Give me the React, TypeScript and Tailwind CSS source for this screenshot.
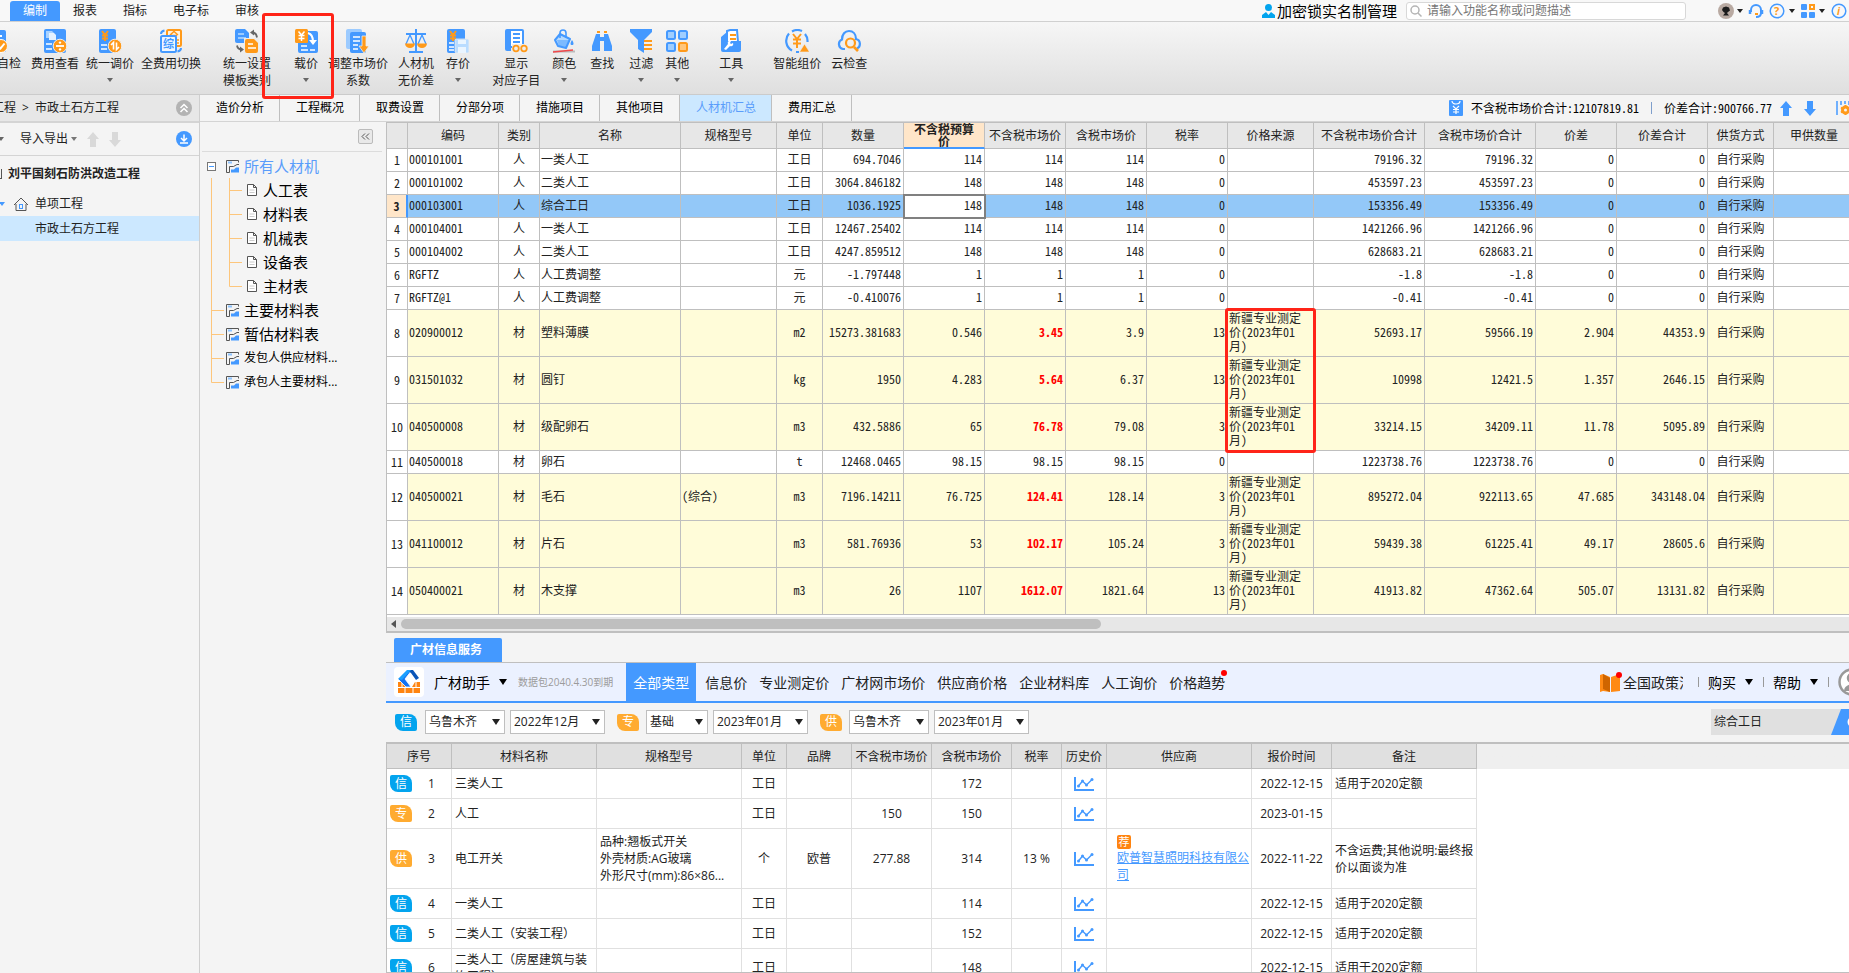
import { ReactNode, useState } from "react";

interface ribbonInterface {
  label: string[];
  icon: ReactNode;
  space: string;
  arrow?: boolean;
  marked?: boolean;
}
interface materialInterface {
  code: string;
  type: string;
  name: string;
  spec?: string;
  unit: string;
  values: string[];        // 数量, 预算价, 不含税市场价, 含税市场价, 税率
  totals: string[];        // 不含税合计, 含税合计, 价差, 价差合计
  priced?: boolean;
}
interface quoteInterface {
  tag: "信" | "专" | "供";
  name: string;
  spec?: string;
  unit: string;
  brand?: string;
  net?: string;
  gross: string;
  rate?: string;
  supplier?: string;
  date: string;
  note: string;
}

const BLUE = "#4499ff";
const ORANGE = "#ff9a1a";
const uiFont = "font-['Open_Sans','Noto_Sans_CJK_SC',sans-serif]";
const gridFont = "font-['Noto_Sans_CJK_SC',sans-serif] [font-feature-settings:'hwid']";
const PRICE_SOURCE = "新疆专业测定\n价(2023年01\n月)";

function Caret({ className = "" }: { className?: string }) {
  return (
    <svg className={className} width="6" height="4" viewBox="0 0 6 4" fill="currentColor">
      <path d="M0 0h6L3 4z" />
    </svg>
  );
}

function BigCaret({ className = "" }: { className?: string }) {
  return (
    <svg className={className} width="8" height="6" viewBox="0 0 8 6" fill="currentColor">
      <path d="M0 0h8L4 6z" />
    </svg>
  );
}

function Icon({ children }: { children: ReactNode }) {
  return (
    <svg className="shrink-0" width="24" height="24" viewBox="0 0 24 24" fill="none">
      {children}
    </svg>
  );
}

const checkIcon = (
  <Icon>
    <rect x="3" y="1" width="20" height="22" rx="2" fill={BLUE} />
    <path d="M7 7h12M7 12h6" stroke="#fff" strokeWidth="2" />
    <circle cx="18" cy="17" r="6.500" fill={ORANGE} stroke="#fff" />
    <path d="m15 17 2.500 2.500 4-5" stroke="#fff" strokeWidth="2" />
  </Icon>
);
const viewIcon = (
  <Icon>
    <rect x="1" y="0" width="22" height="24" rx="2" fill={BLUE} />
    <path d="M3 2h6l2 2v5H3z" fill="#a9d2ff" />
    <path d="M6 4h5l2 2v5H6z" fill="#e3f1ff" />
    <path d="M3 15h6M3 20h6" stroke="#fff" strokeWidth="1.500" />
    <circle cx="17" cy="17" r="6.800" fill={ORANGE} stroke="#eee" />
    <path d="M13 17h8" stroke="#fff" strokeWidth="1.800" />
    <circle cx="17" cy="13.600" r="1.200" fill="#fff" />
    <circle cx="17" cy="20.400" r="1.200" fill="#fff" />
  </Icon>
);
const adjustIcon = (
  <Icon>
    <rect x="1" y="0" width="17" height="24" rx="2" fill={BLUE} />
    <path d="m4 2 3 4 3-4M7 6v6M4 6.500h6M4 9.500h6" stroke={ORANGE} strokeWidth="2" />
    <path d="M3 16h6M3 20h6" stroke="#fff" strokeWidth="1.500" />
    <circle cx="17" cy="17" r="6.800" fill={ORANGE} stroke="#eee" />
    <path d="M15.500 20.500v-7L13 16M18.500 13.500v7L21 18" stroke="#fff" strokeWidth="1.600" />
  </Icon>
);
const switchIcon = (
  <Icon>
    <rect x="8" y="1" width="14" height="16" rx="1.500" fill="#fff3e0" stroke={ORANGE} strokeWidth="2" />
    <path d="m11 6 4-3.500L19 6M12 6.500h6" stroke={ORANGE} strokeWidth="1.500" />
    <path d="M18 11h2M18 14h2" stroke={ORANGE} strokeWidth="1.500" />
    <rect x="2" y="7" width="15" height="16" rx="1.500" fill="#eef6ff" stroke={BLUE} strokeWidth="2" />
    <text x="4" y="19" fontSize="11" fontWeight="700" fill={BLUE}>综</text>
    <path d="M2 5c0-2 1-3 3.500-3.500M22 19c0 2-1 3-3.500 3.500" stroke={BLUE} strokeWidth="2" />
  </Icon>
);
const templateIcon = (
  <Icon>
    <path d="M0 2a2 2 0 0 1 2-2h8l4 4v10H2a2 2 0 0 1-2-2z" fill={BLUE} />
    <path d="M3 5h6M3 9h8" stroke="#b8dbff" strokeWidth="1.600" />
    <path d="M9 9h15v15H9z" fill="#ececec" />
    <path d="M10 12a2 2 0 0 1 2-2h7l4 4v8a2 2 0 0 1-2 2H12a2 2 0 0 1-2-2z" fill={ORANGE} />
    <path d="M13 15h5M13 19h8" stroke="#fff" strokeWidth="1.600" />
    <path d="M17 3.500c3 0 4.500 1.500 5 5M7 20.500c-3 0-4.500-1-5-4" stroke="#666" strokeWidth="1.800" />
    <path d="m15 3.500 4-3v6zM9 20.500l-4-3v6z" fill="#666" />
  </Icon>
);
const loadIcon = (
  <Icon>
    <path d="M4 2h18a2 2 0 0 1 2 2v18a2 2 0 0 1-2 2H6a2 2 0 0 1-2-2z" fill={BLUE} />
    <rect x="1" y="0" width="13" height="14" rx="1.500" fill={ORANGE} />
    <path d="m4.500 2.500 3 3.500 3-3.500M7.500 6v6M4.500 6.500h6M4.500 9.500h6" stroke="#fff" strokeWidth="1.500" />
    <path d="M14 4c4 1 5 4 5 9" stroke="#fff" strokeWidth="2.200" />
    <path d="M15 11h8l-4 5z" fill="#fff" />
    <path d="M7 17h6M7 21h7M16 21h5" stroke="#fff" strokeWidth="1.600" />
  </Icon>
);
const ratioIcon = (
  <Icon>
    <rect x="0" y="0" width="16" height="20" rx="2" fill="#9ccbff" />
    <rect x="4" y="3" width="16" height="21" rx="2" fill={BLUE} />
    <path d="M7 8h7M7 12h7M7 16h5M7 20h5" stroke="#fff" strokeWidth="1.500" />
    <path d="M16 7h4v10h3l-5 7-5-7h3z" fill={ORANGE} stroke="#eee" strokeWidth="0.800" />
  </Icon>
);
const scaleIcon = (
  <Icon>
    <path d="M12 0v23M2 5h20M5 23h14" stroke={BLUE} strokeWidth="2" />
    <path d="m6 6-4 9M6 6l4 9M18 6l-4 9M18 6l4 9" stroke={BLUE} strokeWidth="1.300" />
    <path d="M1 14.500h10a5 4.500 0 0 1-10 0zM13 14.500h10a5 4.500 0 0 1-10 0z" fill={ORANGE} />
  </Icon>
);
const storeIcon = (
  <Icon>
    <rect x="1" y="0" width="18" height="24" rx="2" fill={BLUE} />
    <path d="m4 2 3 4 3-4M7 6v6M4 6.500h6M4 9.500h6" stroke={ORANGE} strokeWidth="2" />
    <path d="M3 14h5M3 18h5M3 21h5" stroke="#fff" strokeWidth="1.400" />
    <rect x="9" y="10" width="14" height="14" rx="1.500" fill="#b9dcff" stroke="#eee" strokeWidth="0.800" />
    <path d="M12 11h8v4h-8zM12 18h8v6h-8z" fill="#eaf5ff" />
  </Icon>
);
const showIcon = (
  <Icon>
    <path d="M3 0h4v22H3a2 2 0 0 1-2-2V2a2 2 0 0 1 2-2z" fill={BLUE} />
    <rect x="6" y="1" width="13" height="17" rx="1" fill="#fff" stroke={BLUE} strokeWidth="2" />
    <path d="M9 5h7M9 9h7M9 13h7" stroke={BLUE} strokeWidth="1.800" />
    <path d="M8 15h16v9H8z" fill="#eee" />
    <circle cx="12" cy="19.500" r="2.800" stroke={ORANGE} strokeWidth="1.800" />
    <circle cx="20" cy="19.500" r="2.800" stroke={ORANGE} strokeWidth="1.800" />
  </Icon>
);
const colorIcon = (
  <Icon>
    <path d="m8 5 10 5-4 9-8-2-3-6z" fill="#b5daff" stroke={BLUE} strokeWidth="2" strokeLinejoin="round" />
    <path d="M5 11h13l-4 7-7-1z" fill={BLUE} opacity=".5" />
    <path d="M8 9V4c0-4 6-4 6 0v5" stroke={BLUE} strokeWidth="1.600" />
    <path d="M20 11c2 3 2 5 0 5s-2-2 0-5z" fill={BLUE} />
    <path d="M1 22.500h22" stroke="#bbb" strokeWidth="2" />
    <path d="m1 23 20-2" stroke="#f0484b" strokeWidth="1.600" />
  </Icon>
);
const findIcon = (
  <Icon>
    <path d="M6 5h4v17H2v-5zM14 5h4l4 12v5h-8z" fill={BLUE} />
    <path d="M10 8h4v4h-4z" fill={BLUE} />
    <path d="M7 2h3v2H7zM14 2h3v2h-3z" fill={ORANGE} />
  </Icon>
);
const filterIcon = (
  <Icon>
    <path d="M1 0h22v3l-8 8v13l-6-4v-9L1 3z" fill={BLUE} />
    <path d="M15 12h8M15 16h8M15 20h8" stroke={ORANGE} strokeWidth="2" />
  </Icon>
);
const otherIcon = (
  <Icon>
    <rect x="2" y="2" width="8" height="8" rx="1.500" fill="#9fceff" stroke={BLUE} strokeWidth="2" />
    <rect x="14" y="2" width="8" height="8" rx="1.500" fill="#9fceff" stroke={BLUE} strokeWidth="2" />
    <rect x="2" y="14" width="8" height="8" rx="1.500" fill="#9fceff" stroke={BLUE} strokeWidth="2" />
    <rect x="14" y="14" width="8" height="8" rx="1.500" fill="#ffc67b" stroke={ORANGE} strokeWidth="2" />
  </Icon>
);
const toolIcon = (
  <Icon>
    <path d="m8 2 3-1h7l1 12H8z" fill="#fff" stroke={BLUE} strokeWidth="2" />
    <path d="M11 6h6M11 10h6" stroke={ORANGE} strokeWidth="2" />
    <path d="M2 8 8 3v9h14v9a2 2 0 0 1-2 2H4a2 2 0 0 1-2-2z" fill={BLUE} />
    <path d="m5 20 4-5c-1-2 1-4 3-3l-1 2 1 1 2-1c1 2-1 4-3 3l-4 4z" fill="#fff" />
  </Icon>
);
const smartIcon = (
  <Icon>
    <path d="M7 21.500A11 11 0 0 1 4 4.500M7 2.500A11 11 0 0 1 17 2M20 5a11 11 0 0 1 2.500 8M11 23h3" stroke={BLUE} strokeWidth="2.200" />
    <path d="m8 5 4 5 4-5M12 10v9M8 10.500h8M8 14.500h8" stroke={ORANGE} strokeWidth="2" />
    <path d="m19.500 15 5 8h-10z" fill={ORANGE} stroke="#eee" strokeWidth="0.600" />
  </Icon>
);
const cloudIcon = (
  <Icon>
    <path d="M8 20H6a5 5 0 0 1-1-9.500C5 5 8 2 12 2s7 3 7 8c5 1 5 8 1 9.500" stroke={BLUE} strokeWidth="2.200" />
    <circle cx="13.500" cy="14" r="4.500" stroke={ORANGE} strokeWidth="2.200" />
    <path d="m17 18 4 4" stroke={ORANGE} strokeWidth="2.600" />
  </Icon>
);

const ribbonItems: ribbonInterface[] = [
  { label: ["费用查看"], icon: viewIcon, space: "ml-[10px]" },
  { label: ["统一调价"], icon: adjustIcon, space: "ml-[7px]", arrow: true },
  { label: ["全费用切换"], icon: switchIcon, space: "ml-[7px]" },
  { label: ["统一设置", "模板类别"], icon: templateIcon, space: "ml-[22px]" },
  { label: ["载价"], icon: loadIcon, space: "ml-[23px]", arrow: true, marked: true },
  { label: ["调整市场价", "系数"], icon: ratioIcon, space: "ml-[10px]" },
  { label: ["人材机", "无价差"], icon: scaleIcon, space: "ml-[10px]" },
  { label: ["存价"], icon: storeIcon, space: "ml-3", arrow: true },
  { label: ["显示", "对应子目"], icon: showIcon, space: "ml-[22px]" },
  { label: ["颜色"], icon: colorIcon, space: "ml-3", arrow: true },
  { label: ["查找"], icon: findIcon, space: "ml-[14px]" },
  { label: ["过滤"], icon: filterIcon, space: "ml-[15px]", arrow: true },
  { label: ["其他"], icon: otherIcon, space: "ml-3", arrow: true },
  { label: ["工具"], icon: toolIcon, space: "ml-[30px]", arrow: true },
  { label: ["智能组价"], icon: smartIcon, space: "ml-[30px]" },
  { label: ["云检查"], icon: cloudIcon, space: "ml-[10px]" },
];

const menus = ["编制", "报表", "指标", "电子标", "审核"];
const pageTabs = ["造价分析", "工程概况", "取费设置", "分部分项", "措施项目", "其他项目", "人材机汇总", "费用汇总"];
const gridHeads = [
  "编码", "类别", "名称", "规格型号", "单位", "数量", "不含税预算价", "不含税市场价", "含税市场价",
  "税率", "价格来源", "不含税市场价合计", "含税市场价合计", "价差", "价差合计", "供货方式", "甲供数量",
];
const gridWidths = [
  "w-[21px]", "w-[91px]", "w-[41px]", "w-[141px]", "w-[96px]", "w-[46px]", "w-[81px]", "w-[81px]", "w-[81px]", "w-[81px]",
  "w-[81px]", "w-[86px]", "w-[111px]", "w-[111px]", "w-[81px]", "w-[91px]", "w-[66px]", "w-[81px]",
];
const materials: materialInterface[] = [
  { code: "000101001", type: "人", name: "一类人工", unit: "工日", values: ["694.7046", "114", "114", "114", "0"], totals: ["79196.32", "79196.32", "0", "0"] },
  { code: "000101002", type: "人", name: "二类人工", unit: "工日", values: ["3064.846182", "148", "148", "148", "0"], totals: ["453597.23", "453597.23", "0", "0"] },
  { code: "000103001", type: "人", name: "综合工日", unit: "工日", values: ["1036.1925", "148", "148", "148", "0"], totals: ["153356.49", "153356.49", "0", "0"] },
  { code: "000104001", type: "人", name: "一类人工", unit: "工日", values: ["12467.25402", "114", "114", "114", "0"], totals: ["1421266.96", "1421266.96", "0", "0"] },
  { code: "000104002", type: "人", name: "二类人工", unit: "工日", values: ["4247.859512", "148", "148", "148", "0"], totals: ["628683.21", "628683.21", "0", "0"] },
  { code: "RGFTZ", type: "人", name: "人工费调整", unit: "元", values: ["-1.797448", "1", "1", "1", "0"], totals: ["-1.8", "-1.8", "0", "0"] },
  { code: "RGFTZ@1", type: "人", name: "人工费调整", unit: "元", values: ["-0.410076", "1", "1", "1", "0"], totals: ["-0.41", "-0.41", "0", "0"] },
  { code: "020900012", type: "材", name: "塑料薄膜", unit: "m2", values: ["15273.381683", "0.546", "3.45", "3.9", "13"], totals: ["52693.17", "59566.19", "2.904", "44353.9"], priced: true },
  { code: "031501032", type: "材", name: "圆钉", unit: "kg", values: ["1950", "4.283", "5.64", "6.37", "13"], totals: ["10998", "12421.5", "1.357", "2646.15"], priced: true },
  { code: "040500008", type: "材", name: "级配卵石", unit: "m3", values: ["432.5886", "65", "76.78", "79.08", "3"], totals: ["33214.15", "34209.11", "11.78", "5095.89"], priced: true },
  { code: "040500018", type: "材", name: "卵石", unit: "t", values: ["12468.0465", "98.15", "98.15", "98.15", "0"], totals: ["1223738.76", "1223738.76", "0", "0"] },
  { code: "040500021", type: "材", name: "毛石", spec: "(综合)", unit: "m3", values: ["7196.14211", "76.725", "124.41", "128.14", "3"], totals: ["895272.04", "922113.65", "47.685", "343148.04"], priced: true },
  { code: "041100012", type: "材", name: "片石", unit: "m3", values: ["581.76936", "53", "102.17", "105.24", "3"], totals: ["59439.38", "61225.41", "49.17", "28605.6"], priced: true },
  { code: "050400021", type: "材", name: "木支撑", unit: "m3", values: ["26", "1107", "1612.07", "1821.64", "13"], totals: ["41913.82", "47362.64", "505.07", "13131.82"], priced: true },
];

const quoteHeads = ["序号", "材料名称", "规格型号", "单位", "品牌", "不含税市场价", "含税市场价", "税率", "历史价", "供应商", "报价时间", "备注"];
const quoteWidths = [
  "w-[65px]", "w-[145px]", "w-[145px]", "w-[45px]", "w-[65px]", "w-[80px]", "w-[80px]", "w-[50px]", "w-[45px]", "w-[145px]", "w-[80px]", "w-[145px]",
];
const quotes: quoteInterface[] = [
  { tag: "信", name: "三类人工", unit: "工日", gross: "172", date: "2022-12-15", note: "适用于2020定额" },
  { tag: "专", name: "人工", unit: "工日", net: "150", gross: "150", date: "2023-01-15", note: "" },
  { tag: "供", name: "电工开关", spec: "品种:翘板式开关\n外壳材质:AG玻璃\n外形尺寸(mm):86×86...", unit: "个", brand: "欧普", net: "277.88", gross: "314", rate: "13 %", supplier: "欧普智慧照明科技有限公司", date: "2022-11-22", note: "不含运费;其他说明:最终报价以面谈为准" },
  { tag: "信", name: "一类人工", unit: "工日", gross: "114", date: "2022-12-15", note: "适用于2020定额" },
  { tag: "信", name: "二类人工（安装工程）", unit: "工日", gross: "152", date: "2022-12-15", note: "适用于2020定额" },
  { tag: "信", name: "二类人工（房屋建筑与装饰工程）", unit: "工日", gross: "148", date: "2022-12-15", note: "适用于2020定额" },
];
const quoteTabs = ["信息价", "专业测定价", "广材网市场价", "供应商价格", "企业材料库", "人工询价", "价格趋势"];

function Badge({ tag }: { tag: string }) {
  const color = tag === "信" ? "bg-[#03a4ee]" : "bg-[#ffab30]";
  return (
    <span className={`${color} inline-flex h-[17px] w-[22px] shrink-0 items-center justify-center rounded-[2px_8px_2px_8px] text-[12px] text-white`}>
      {tag}
    </span>
  );
}

function TopBar() {
  return (
    <header className="flex h-[22px] shrink-0 items-center border-b border-[#d0d0d0] bg-[#f8f8f8]">
      <nav className="flex h-full items-end pl-[10px]">
        {menus.map((menu, i) => (
          <button key={menu} className={`h-5 px-[13px] text-[12px] leading-5 ${i === 0 ? "rounded-t-[3px] bg-[#4499ff] text-white" : ""}`}>
            {menu}
          </button>
        ))}
      </nav>
      <div className="ml-auto flex items-center">
        <svg width="13" height="14" viewBox="0 0 13 14" fill="#03a4ee">
          <circle cx="6.500" cy="3.500" r="3.500" />
          <path d="M0 14V11l4-3 2.500 3L9 8l4 3v3z" />
        </svg>
        <a href="#" className="ml-[2px] text-[15px] leading-5 text-black">加密锁实名制管理</a>
        <label className="ml-[9px] mr-8 flex h-[18px] w-[280px] items-center rounded-[3px] border border-[#d8d8d8] bg-white pl-[3px]">
          <svg className="shrink-0" width="12" height="12" viewBox="0 0 12 12" fill="none" stroke="#b5b5b5" strokeWidth="1.500">
            <circle cx="5" cy="5" r="4" />
            <path d="m8 8 3.500 3.500" />
          </svg>
          <input aria-label="搜索" className="ml-[5px] w-full bg-transparent text-[12px] leading-4 outline-none placeholder:text-[#777]" placeholder="请输入功能名称或问题描述" />
        </label>
        <button aria-label="账户" className="flex items-center gap-[3px]">
          <svg width="16" height="16" viewBox="0 0 16 16">
            <circle cx="8" cy="8" r="8" fill="#b9aaa2" />
            <path d="M5 4.500 8 3.500l3 1 1 3-2 1.500-1 1 2 2.500H5L7 10 5.500 9 4 7z" fill="#1c1c1c" />
          </svg>
          <Caret />
        </button>
        <button aria-label="客服" className="ml-[5px]">
          <svg width="16" height="16" viewBox="0 0 16 16" fill="none" stroke={BLUE} strokeWidth="2">
            <path d="M3 9V7a5 5 0 0 1 10 0v3c0 3-2 4-5 4" />
            <path d="M2 7v4M14 7v4" strokeWidth="2.500" />
            <path d="M7 11h3" stroke={ORANGE} />
          </svg>
        </button>
        <button aria-label="帮助" className="ml-[5px] flex items-center gap-1">
          <svg width="16" height="16" viewBox="0 0 16 16" fill="none">
            <circle cx="8" cy="8" r="6.800" stroke={BLUE} strokeWidth="1.500" />
            <text x="5" y="12" fontSize="11" fontWeight="700" fill={ORANGE}>?</text>
          </svg>
          <Caret />
        </button>
        <button aria-label="应用" className="ml-[6px] flex items-center gap-1">
          <svg width="14" height="14" viewBox="0 0 14 14" fill={BLUE}>
            <rect width="6" height="6" rx="1" />
            <rect x="9" y="1" width="4" height="4" fill="none" stroke={ORANGE} strokeWidth="2" />
            <rect y="8" width="6" height="6" rx="1" />
            <rect x="8" y="8" width="6" height="6" rx="1" />
          </svg>
          <Caret />
        </button>
        <button aria-label="关于" className="ml-[6px] mr-[2px]">
          <svg width="16" height="16" viewBox="0 0 16 16" fill="none">
            <circle cx="8" cy="8" r="6.800" stroke={BLUE} strokeWidth="1.500" />
            <text x="6" y="12" fontSize="10" fontStyle="italic" fontWeight="700" fill={ORANGE}>i</text>
          </svg>
        </button>
      </div>
    </header>
  );
}

function Ribbon() {
  return (
    <div className="flex h-[73px] shrink-0 items-start border-b border-[#cbcbcb] bg-linear-to-b from-[#f6f6f6] to-[#dfdfdf] pt-[7px] text-[12px] leading-[17px]">
      <button className="flex w-[21px] flex-col items-end overflow-hidden whitespace-nowrap">
        <span className="mr-[14px]">{checkIcon}</span>
        <span className="pt-[2px]">自检</span>
      </button>
      {ribbonItems.map((item) => (
        <button key={item.label[0]} className={`${item.space} relative flex shrink-0 flex-col items-center whitespace-nowrap`}>
          {item.icon}
          <span className="pt-[2px]">{item.label[0]}</span>
          {item.label[1] && <span>{item.label[1]}</span>}
          {item.arrow && <Caret className="mt-[6px] text-[#666]" />}
          {item.marked && <span className="absolute -inset-x-8 -top-4 z-20 mr-4 h-[86px] rounded-[3px] border-3 border-[#ff2418]" />}
        </button>
      ))}
    </div>
  );
}

function ProjectPanel() {
  return (
    <aside className="w-[200px] shrink-0 border-r border-[#cfcfcf] bg-[#f4f4f4] text-[12px] text-[#222]">
      <div className="flex h-[28px] items-center border-b-2 border-[#d4d4d4] bg-[#e7e7e7]">
        <span className="flex w-4 justify-end overflow-hidden whitespace-nowrap">工程</span>
        <span className="mx-[6px]">&gt;</span>
        <span>市政土石方工程</span>
        <button aria-label="收起" className="ml-auto mr-[7px]">
          <svg width="16" height="16" viewBox="0 0 16 16" fill="none">
            <circle cx="8" cy="8" r="8" fill="#b3b3b3" />
            <path d="m4.500 8 3.500-3.500L11.500 8M4.500 12 8 8.500l3.500 3.500" stroke="#fff" strokeWidth="1.500" />
          </svg>
        </button>
      </div>
      <div className="flex h-[33px] items-center border-b border-[#d4d4d4]">
        <Caret className="-ml-[2px] text-[#666]" />
        <button className="ml-4 flex items-center gap-[3px]">导入导出<Caret className="text-[#777]" /></button>
        <svg className="ml-[10px]" width="12" height="15" viewBox="0 0 12 15" fill="#d9d9d9"><path d="M6 0l6 7H9v8H3V7H0z" /></svg>
        <svg className="ml-[10px]" width="12" height="15" viewBox="0 0 12 15" fill="#d9d9d9"><path d="M6 15l6-7H9V0H3v8H0z" /></svg>
        <button aria-label="下载" className="ml-auto mr-[7px]">
          <svg width="16" height="16" viewBox="0 0 16 16" fill="none" stroke="#fff" strokeWidth="1.500">
            <circle cx="8" cy="8" r="8" fill={BLUE} stroke="none" />
            <path d="M8 3.500v6M5 7l3 3 3-3M4 12h8" />
          </svg>
        </button>
      </div>
      <div className="flex h-[36px] items-center">
        <span className="h-[10px] w-[2px] border-r border-b border-[#555]" />
        <span className="ml-[6px] font-bold">刘平国刻石防洪改造工程</span>
      </div>
      <div className="flex h-[24px] items-center">
        <Caret className="-ml-[1px] text-[#4499ff]" />
        <svg className="ml-[9px]" width="14" height="14" viewBox="0 0 14 14" fill="none" stroke="#555">
          <path d="M0 8l7-7 7 7M2 7v6.500h10V7" />
          <rect x="5.500" y="7.500" width="3" height="4" stroke={BLUE} />
        </svg>
        <span className="ml-[7px]">单项工程</span>
      </div>
      <div className="flex h-[25px] items-center bg-[#cce8ff] pl-[35px]">市政土石方工程</div>
    </aside>
  );
}

function SheetIcon() {
  return (
    <svg className="shrink-0" width="13" height="13" viewBox="0 0 13 13" fill="none">
      <path d="M12.500 2.500V.5H.5v12H3.500" stroke="#555" />
      <path d="M2 2.500h4" stroke="#8cc3ff" strokeWidth="2" />
      <path d="M3.500 12.500V6.500H7.500L11 4.500H13" stroke="#555" />
      <path d="M5 12.500V9.500h3l2-2h3v5z" fill={BLUE} />
    </svg>
  );
}

function TreePanel() {
  const children = ["人工表", "材料表", "机械表", "设备表", "主材表"];
  const sheets = ["主要材料表", "暂估材料表", "发包人供应材料...", "承包人主要材料..."];
  return (
    <aside className="w-[186px] shrink-0 bg-[#f4f4f4] px-[2px] text-black">
      <div className="mr-[2px] flex h-[30px] items-center justify-end border-b border-[#dcdcdc] pr-[9px] pb-px">
        <button aria-label="折叠" className="flex size-[15px] items-center justify-center rounded-[2px] border border-[#bbb] bg-[#e9e9e9]">
          <svg width="9" height="7" viewBox="0 0 9 7" fill="none" stroke="#555"><path d="M4 .5l-3 3 3 3M8 .5l-3 3 3 3" /></svg>
        </button>
      </div>
      <div className="pl-[5px] pt-[2px]">
        <div className="flex h-6 items-center">
          <svg width="9" height="9" viewBox="0 0 9 9" fill="#fff" stroke="#777"><rect x=".5" y=".5" width="8" height="8" /><path d="M2 4.500h5" stroke={BLUE} /></svg>
          <span className="ml-[10px] flex items-center gap-[5px] text-[15px] text-[#5a9dfb]"><SheetIcon />所有人材机</span>
        </div>
        <div className="flex">
          {/* 连接线 */}
          <svg className="shrink-0" width="36" height="216" viewBox="0 0 36 216" fill="none" stroke="#fdc67c">
            <path d="M4.500 0v204.500H17M4.500 132.500H17M4.500 156.500H17M4.500 180.500H17" />
            <path d="M22.500 0v108.500H35M22.500 12.500H35M22.500 36.500H35M22.500 60.500H35M22.500 84.500H35" />
          </svg>
          <ul className="-ml-[17px] whitespace-nowrap">
            {children.map((name) => (
              <li key={name} className="flex h-6 items-center pl-[21px] text-[15px]">
                <svg className="mr-[6px]" width="10" height="12" viewBox="0 0 10 12" fill="#fff" stroke="#555">
                  <path d="M.5.5h6l3 3v8h-9zM6.500.5v3h3" />
                  <path d="M2.500 6h5M2.500 8.500h5" stroke="#ccc" />
                </svg>
                {name}
              </li>
            ))}
            {sheets.map((name, i) => (
              <li key={name} className={`flex h-6 items-center gap-[5px] ${i < 2 ? "text-[15px]" : "text-[12px]"}`}>
                <SheetIcon />{name}
              </li>
            ))}
          </ul>
        </div>
      </div>
    </aside>
  );
}

function PageTabs() {
  const [tab, setTab] = useState("人材机汇总");
  return (
    <div className="flex h-[27px] shrink-0 border-b border-[#d4d4d4] bg-[#f4f4f4] text-[12px]">
      {pageTabs.map((name) => (
        <button key={name} onClick={() => setTab(name)} className={`shrink-0 border-r border-[#bfbfbf] pl-4 pr-[15px] ${tab === name ? "bg-[#cce8ff] text-[#5a9dfb]" : "text-black"}`}>
          {name}
        </button>
      ))}
      <div className={`${gridFont} ml-auto flex shrink-0 items-center whitespace-nowrap text-black`}>
        <svg width="14" height="16" viewBox="0 0 14 16" fill="none">
          <rect width="14" height="16" rx="1" fill={BLUE} />
          <path d="M3 1c0 4 8 4 8 0M4 6l3 3 3-3M7 9v5M4 9.500h6M4 12h6" stroke="#fff" strokeWidth="1.200" />
        </svg>
        <span className="ml-2">不含税市场价合计:12107819.81</span>
        <span className="mx-3 h-3 w-px bg-[#7f9fcc]" />
        <span>价差合计:900766.77</span>
        <svg className="ml-2" width="12" height="15" viewBox="0 0 12 15" fill={BLUE}><path d="M6 0l6 7H9v8H3V7H0z" /></svg>
        <svg className="ml-3" width="12" height="15" viewBox="0 0 12 15" fill={BLUE}><path d="M6 15l6-7H9V0H3v8H0z" /></svg>
        <svg className="ml-5" width="13" height="16" viewBox="0 0 13 16" fill="none" stroke={BLUE} strokeWidth="1.500">
          <path d="M1 1v14M5 1v4M9 1v3M13 1v4" />
          <circle cx="9.500" cy="10" r="3" stroke={ORANGE} strokeWidth="3" />
          <path d="M9.500 5v2M9.500 13v2M5 7.500l1.500 1M5 12.500l1.500-1" stroke={ORANGE} strokeWidth="2" />
        </svg>
      </div>
    </div>
  );
}

function MaterialGrid() {
  const cell = "border-r border-b border-[#bfbfbf]";
  return (
    <div className="shrink-0 overflow-hidden border-t border-l border-[#bfbfbf] bg-white">
      <table className={`${gridFont} w-[1468px] table-fixed border-separate border-spacing-0 text-[12px] leading-[14px] text-[#222]`}>
        <colgroup>{gridWidths.map((w, i) => <col key={i} className={w} />)}</colgroup>
        <thead>
          <tr className="h-[26px] bg-[#e7e7e7]">
            <th className={cell} />
            {gridHeads.map((head) =>
              head === "不含税预算价" ? (
                <th key={head} className="border-r border-b-2 border-r-[#bfbfbf] border-b-[#4499ff] bg-[#ffe6c9] p-0">
                  <div className="mx-auto h-[24px] w-[66px] leading-[12px]">{head}</div>
                </th>
              ) : (
                <th key={head} className={`${cell} whitespace-nowrap p-0 pb-[2px] font-normal`}>{head}</th>
              )
            )}
          </tr>
        </thead>
        <tbody>
          {materials.map((row, i) => {
            const active = i === 2;
            const bg = active ? "bg-[#93c8f8]" : row.priced ? "bg-[#fffcd9]" : "bg-white";
            return (
              <tr key={i} className={`${bg} ${row.priced ? "h-[47px]" : "h-[23px]"}`}>
                <td className={`border-b border-[#bfbfbf] p-0 text-center ${active ? "border-r-2 border-r-[#4499ff] bg-[#ffe6c9] font-bold" : "border-r bg-white"}`}>{i + 1}</td>
                <td className={`${cell} p-0 pb-[2px] pl-px`}>{row.code}</td>
                <td className={`${cell} p-0 pb-[2px] text-center`}>{row.type}</td>
                <td className={`${cell} p-0 pb-[2px] pl-px`}>{row.name}</td>
                <td className={`${cell} p-0 pb-[2px] pl-px`}>{row.spec}</td>
                <td className={`${cell} p-0 pb-[2px] text-center`}>{row.unit}</td>
                {row.values.map((value, j) => (
                  <td
                    key={j}
                    className={`${cell} p-0 pb-[2px] pr-[2px] text-right ${active && j === 1 ? "bg-white outline-2 -outline-offset-1 outline-[#808080]" : ""} ${row.priced && j === 2 ? "font-bold text-[#ff0000]" : ""}`}
                  >
                    {value}
                  </td>
                ))}
                <td className={`${cell} relative whitespace-pre-line p-0 pb-[2px] pl-px`}>
                  {row.priced && PRICE_SOURCE}
                  {i === 7 && <span className="absolute -left-[3px] -top-[2px] z-10 h-[145px] w-[91px] rounded-[3px] border-3 border-[#ff2418]" />}
                </td>
                {row.totals.map((value, j) => (
                  <td key={j} className={`${cell} p-0 pb-[2px] pr-[2px] text-right`}>{value}</td>
                ))}
                <td className={`${cell} p-0 pb-[2px] text-center`}>自行采购</td>
                <td className={cell} />
              </tr>
            );
          })}
        </tbody>
      </table>
      <div className="mt-[2px] flex h-[16px] items-center border-b-2 border-[#bfbfbf] bg-[#e7e7e7] pl-[4px]">
        <svg width="5" height="8" viewBox="0 0 5 8" fill="#555"><path d="M5 0v8L0 4z" /></svg>
        <div className="ml-[5px] h-[10px] w-[48%] rounded-full bg-[#bfbfbf]" />
      </div>
    </div>
  );
}

function Pick({ label, value, width }: { label: string; value: string; width: string }) {
  return (
    <label className={`relative ${width} shrink-0`}>
      <select aria-label={label} className="h-6 w-full appearance-none border border-[#bfbfbf] bg-white px-[3px] text-[12px] outline-none">
        <option>{value}</option>
      </select>
      <BigCaret className="pointer-events-none absolute right-[5px] top-[9px] text-[#222]" />
    </label>
  );
}

function TrendIcon() {
  return (
    <svg className="mx-auto" width="20" height="14" viewBox="0 0 20 14" fill="none" stroke={BLUE}>
      <path d="M1 0v13h19" strokeWidth="2" />
      <path d="m4.500 9 4-5 4 4 6-6" strokeWidth="1.400" />
      <g fill={BLUE} stroke="none">
        <circle cx="4.500" cy="9" r="1.500" /><circle cx="8.500" cy="4" r="1.500" /><circle cx="12.500" cy="8" r="1.500" /><circle cx="18" cy="2.500" r="1.500" />
      </g>
    </svg>
  );
}

function QuotePanel() {
  const head = "border-r border-b border-[#bfbfbf]";
  const cell = "border-r border-b border-[#e0e0e0] px-[3px] py-0";
  return (
    <div className="flex min-h-0 flex-1 flex-col bg-[#f4f4f4] text-[12px] text-[#222]">
      <div className="flex h-[30px] shrink-0 items-end border-b border-[#bfbfbf] pl-2">
        <button className="h-6 rounded-t-[2px] bg-[#4499ff] pl-4 pr-5 font-bold text-white">广材信息服务</button>
      </div>
      <div className="flex h-[40px] shrink-0 items-center overflow-hidden whitespace-nowrap border-b-2 border-[#4499ff] bg-[#ebf1ff] pl-2 text-[14px]">
        <span className="flex size-[30px] items-center justify-center rounded-[4px] bg-white">
          <svg width="24" height="24" viewBox="0 0 24 24" fill="none">
            <path d="M1 12h7l4 5h3l3-5h5v11H1z" fill="#ff8410" />
            <path d="M1 17.500h22M8 18v5M16 18v5M5 12v5M19 12v5" stroke="#fff" />
            <path d="M10 0h5L8 9l6 8H9L1 9z" fill="#1672f0" stroke="#fff" strokeWidth="0.800" />
            <path d="M10 0h6l6 8-3 2-5-7z" fill="#0a55b8" />
            <path d="M10 0h4L5 10 1 9z" fill="#1aa0ff" />
          </svg>
        </span>
        <button className="ml-[10px] flex items-center gap-[9px] text-black">广材助手<BigCaret /></button>
        <span className="ml-[11px] text-[10px] text-[#9b9b9b]">数据包2040.4.30到期</span>
        <button className="ml-[13px] h-full bg-[#4499ff] px-[7px] text-white">全部类型</button>
        <nav className="ml-[9px] flex gap-3">
          {quoteTabs.map((name) => (
            <button key={name} className="relative">
              {name}
              {name === "价格趋势" && <span className="absolute -right-[2px] -top-[2px] size-[6px] rounded-full bg-[#ff0000]" />}
            </button>
          ))}
        </nav>
        <div className="ml-auto flex items-center">
          <svg width="23" height="21" viewBox="0 0 23 21">
            <path d="M0 3l3-1 7 3v15l-7-1-3 1z" fill="#ff8a14" />
            <path d="M3 2l7 4v14l-7-3z" fill="#cf6500" />
            <path d="M11 5l6-2h3v16l-9 1z" fill="#ff8a14" />
            <circle cx="19" cy="3" r="3" fill="#ff0000" />
          </svg>
          <a href="#" className="w-[60px] overflow-hidden">全国政策法规</a>
          <span className="ml-[15px] h-[10px] w-px bg-[#999]" />
          <button className="ml-[9px] flex items-center gap-[9px] text-black">购买<BigCaret /></button>
          <span className="ml-[10px] h-[10px] w-px bg-[#999]" />
          <button className="ml-[9px] flex items-center gap-[9px] text-black">帮助<BigCaret /></button>
          <span className="ml-[10px] h-[10px] w-px bg-[#999]" />
          <button aria-label="用户" className="ml-[9px] w-[11px] overflow-hidden">
            <svg className="max-w-none" width="28" height="28" viewBox="0 0 28 28" fill="none">
              <circle cx="14" cy="14" r="12.500" fill="#fff" stroke="#999" strokeWidth="2.500" />
              <circle cx="14" cy="10" r="4" stroke="#999" strokeWidth="2.500" />
              <path d="M6 23c0-9 16-9 16 0z" fill="#999" />
            </svg>
          </button>
        </div>
      </div>
      <div className="flex h-[39px] shrink-0 items-center pb-px pl-[9px]">
        <Badge tag="信" />
        <div className="ml-2 mr-3 flex gap-[5px]">
          <Pick label="信息价地区" value="乌鲁木齐" width="w-[80px]" />
          <Pick label="信息价期数" value="2022年12月" width="w-[95px]" />
        </div>
        <Badge tag="专" />
        <div className="ml-[7px] mr-3 flex gap-[5px]">
          <Pick label="测定价类型" value="基础" width="w-[62px]" />
          <Pick label="测定价期数" value="2023年01月" width="w-[95px]" />
        </div>
        <Badge tag="供" />
        <div className="ml-[7px] flex gap-[5px]">
          <Pick label="供应商地区" value="乌鲁木齐" width="w-[80px]" />
          <Pick label="供应商期数" value="2023年01月" width="w-[95px]" />
        </div>
        <div className="ml-auto flex h-[26px] bg-[#e0e0e0]">
          <input aria-label="搜索材料" defaultValue="综合工日" className="w-[120px] bg-transparent pl-[3px] outline-none" />
          <button aria-label="查询">
            <svg width="18" height="26" viewBox="0 0 18 26" fill="none">
              <path d="M10 0h8v26H0z" fill={BLUE} />
              <circle cx="22" cy="13" r="4.500" stroke="#fff" strokeWidth="2" />
            </svg>
          </button>
        </div>
      </div>
      <div className="min-h-0 flex-1 overflow-hidden border-t-2 border-b border-l border-[#bfbfbf] bg-white">
        <div className="bg-linear-to-b from-[#efefef] from-[25px] to-white to-[25px]">
          <table className="w-[1090px] table-fixed border-separate border-spacing-0 leading-[17px]">
            <colgroup>{quoteWidths.map((w, i) => <col key={i} className={w} />)}</colgroup>
            <thead>
              <tr className="h-[25px] bg-[#e0e0e0]">
                {quoteHeads.map((name) => <th key={name} className={`${head} whitespace-nowrap p-0 font-normal`}>{name}</th>)}
              </tr>
            </thead>
            <tbody>
              {quotes.map((row, i) => (
                <tr key={i} className={`${row.supplier ? "h-[60px]" : i === 5 ? "h-[38px]" : "h-[30px]"} bg-white text-center`}>
                  <td className={cell}>
                    <div className="flex items-center"><Badge tag={row.tag} /><span className="w-[39px] shrink-0">{i + 1}</span></div>
                  </td>
                  <td className={`${cell} text-left`}>{row.name}</td>
                  <td className={`${cell} whitespace-pre text-left`}>{row.spec}</td>
                  <td className={cell}>{row.unit}</td>
                  <td className={cell}>{row.brand}</td>
                  <td className={cell}>{row.net}</td>
                  <td className={cell}>{row.gross}</td>
                  <td className={cell}>{row.rate}</td>
                  <td className={cell}><TrendIcon /></td>
                  <td className="border-r border-b border-[#e0e0e0] p-0 pl-[10px] text-left">
                    {row.supplier && (
                      <>
                        <span className="block size-[14px] rounded-[2px] bg-[#ff8410] text-center text-[11px] leading-[14px] text-white">荐</span>
                        <a href="#" className="block text-[#4499ff] underline">{row.supplier}</a>
                      </>
                    )}
                  </td>
                  <td className={cell}>{row.date}</td>
                  <td className="border-r border-b border-[#e0e0e0] p-0 pl-[3px] text-left">{row.note}</td>
                </tr>
              ))}
            </tbody>
          </table>
        </div>
      </div>
    </div>
  );
}

export default function App() {
  return (
    <div className={`${uiFont} flex h-screen flex-col overflow-hidden bg-[#f4f4f4] text-[#222]`}>
      <TopBar />
      <Ribbon />
      <div className="flex min-h-0 flex-1">
        <ProjectPanel />
        <main className="flex min-w-0 flex-1 flex-col">
          <PageTabs />
          <div className="flex min-h-0 flex-1">
            <TreePanel />
            <section className="flex min-w-0 flex-1 flex-col">
              <MaterialGrid />
              <QuotePanel />
            </section>
          </div>
        </main>
      </div>
    </div>
  );
}
